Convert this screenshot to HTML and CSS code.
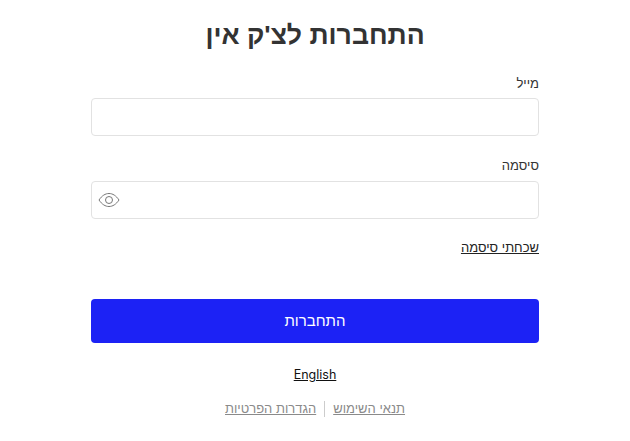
FILE: index.html
```html
<!DOCTYPE html>
<html lang="he" dir="rtl">
<head>
    <meta charset="UTF-8">
    <title>התחברות לצ'ק אין</title>
    <link rel="stylesheet" href="styles.css">
</head>
<body>
    <div class="login">
        <h1 class="title">התחברות לצ'ק אין</h1>

        <label class="label" for="mail">מייל</label>
        <input class="field" type="text" id="mail">

        <label class="label label-pass" for="pass">סיסמה</label>
        <div class="pass-wrap">
            <input class="field" type="password" id="pass">
            <svg class="eye" width="22" height="16" viewBox="0 0 22 16" fill="none" stroke="#777" stroke-width="1">
                <path d="M1 8C4 3.6 7.3 1.5 11 1.5S18 3.6 21 8C18 12.4 14.700 14.500 11 14.500S4 12.400 1 8Z"/>
                <circle cx="11" cy="8" r="3.500"/>
            </svg>
        </div>

        <a class="forgot" href="#">שכחתי סיסמה</a>

        <button class="submit" type="button">התחברות</button>

        <a class="lang" href="#" dir="ltr">English</a>

        <div class="legal">
            <a href="#">תנאי השימוש</a>
            <span class="sep"></span>
            <a href="#">הגדרות הפרטיות</a>
        </div>
    </div>
</body>
</html>
```

FILE: styles.css
```css
body {
    margin: 0;
    background: #fff;
    font-family: "Liberation Sans", "Open Sans", sans-serif;
    color: #333;
}

.login {
    width: 448px;
    margin: 0 auto;
    padding-top: 17px;
    display: flex;
    flex-direction: column;
}

.title {
    margin: 0 0 22px;
    font-size: 26.6px;
    line-height: 36px;
    font-weight: 700;
    text-align: center;
    color: #333;
}

.label {
    font-size: 13px;
    line-height: 18px;
    margin-bottom: 5px;
}

.label-pass {
    margin-top: 21px;
    margin-bottom: 6px;
}

.field {
    display: block;
    box-sizing: border-box;
    width: 100%;
    height: 38px;
    border: 1px solid #e2e2e2;
    border-radius: 4px;
    background: #fff;
    outline: none;
}

.pass-wrap {
    position: relative;
}

.eye {
    position: absolute;
    left: 7px;
    top: 11px;
}

.forgot {
    align-self: flex-start;
    margin-top: 20px;
    font-size: 13px;
    line-height: 18px;
    color: #222;
}

.submit {
    margin-top: 42px;
    height: 44px;
    padding: 0 0 2px;
    border: 0;
    border-radius: 4px;
    background: #1c22f5;
    color: #fff;
    font-family: inherit;
    font-size: 15px;
}

.lang {
    align-self: center;
    margin-top: 23px;
    font-family: Inter, "Liberation Sans", sans-serif;
    font-size: 12.5px;
    line-height: 18px;
    color: #111;
}

.legal {
    display: flex;
    justify-content: center;
    align-items: center;
    gap: 8px;
    margin-top: 16px;
    font-size: 13px;
    line-height: 18px;
}

.legal a {
    color: #8a8a8a;
}

.sep {
    width: 1px;
    height: 16px;
    background: #ccc;
}
```
